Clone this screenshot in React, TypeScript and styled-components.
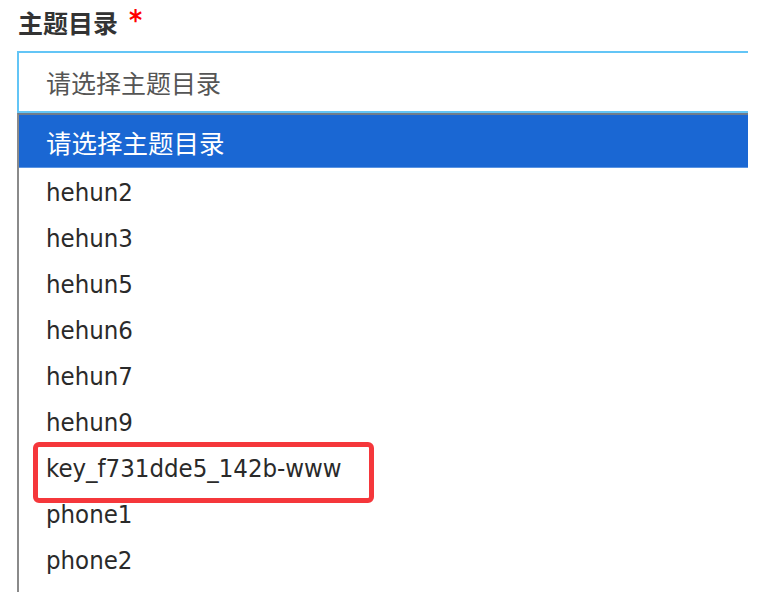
import React from 'react';
import styled, { createGlobalStyle } from 'styled-components';

const GlobalStyle = createGlobalStyle`
  html, body {
    margin: 0;
    padding: 0;
    background: #fff;
  }
  body {
    font-family: "DejaVu Sans", "Noto Sans CJK SC", sans-serif;
    font-stretch: condensed;
  }
`;

const options = [
  'hehun2',
  'hehun3',
  'hehun5',
  'hehun6',
  'hehun7',
  'hehun9',
  'key_f731dde5_142b-www',
  'phone1',
  'phone2',
];

const Page = styled.div`
  width: 784px;
  height: 598px;
  overflow: hidden;
`;

const Label = styled.div`
  display: flex;
  align-items: center;
  gap: 11px;
  height: 44px;
  padding: 0 0 0 18px;
  margin-bottom: 7px;
  font-family: "Noto Sans CJK SC", sans-serif;
  font-size: 25px;
  font-weight: 700;
  color: #333;
`;

const Required = styled.span`
  color: #f00;
  font-family: "DejaVu Sans", sans-serif;
  font-size: 28px;
  font-weight: 700;
  margin-top: -4px;
`;

const Field = styled.div`
  margin-left: 17px;
  width: 731px;
  overflow: hidden;
`;

const SelectBox = styled.div`
  display: flex;
  align-items: center;
  height: 58px;
  padding-left: 27px;
  border: 2px solid #63c5f6;
  border-right: none;
  font-family: "Noto Sans CJK SC", sans-serif;
  font-size: 25px;
  color: #555;
`;

const List = styled.ul`
  list-style: none;
  margin: 0;
  padding: 1px 0 9px;
  border-left: 2px solid #8a8a8a;
  border-top: 2px solid #6f7c8c;
`;

const Option = styled.li<{ $active?: boolean }>`
  position: relative;
  display: flex;
  align-items: center;
  height: ${(p) => (p.$active ? '52px' : '46px')};
  padding-left: 27px;
  font-size: 25.5px;
  color: ${(p) => (p.$active ? '#fff' : '#2a2a2a')};
  background: ${(p) => (p.$active ? '#1a67d3' : 'transparent')};
  border-bottom: ${(p) => (p.$active ? '1px solid #5a94e2' : 'none')};
  margin-top: ${(p) => (p.$active ? '-1px' : '0')};
  margin-bottom: ${(p) => (p.$active ? '1px' : '0')};
  font-family: ${(p) =>
    p.$active ? '"Noto Sans CJK SC", sans-serif' : '"DejaVu Sans", "Noto Sans CJK SC", sans-serif'};
`;

const Highlight = styled.span`
  position: absolute;
  left: 14px;
  top: -3px;
  width: 331px;
  height: 51px;
  border: 5px solid #f5373b;
  border-radius: 6px;
  pointer-events: none;
`;

export default function App() {
  return (
    <Page>
      <GlobalStyle />
      <Label>
        主题目录
        <Required>*</Required>
      </Label>
      <Field>
        <SelectBox>请选择主题目录</SelectBox>
        <List>
          <Option $active>请选择主题目录</Option>
          {options.map((o) => (
            <Option key={o}>
              {o}
              {o.startsWith('key_') && <Highlight />}
            </Option>
          ))}
        </List>
      </Field>
    </Page>
  );
}
